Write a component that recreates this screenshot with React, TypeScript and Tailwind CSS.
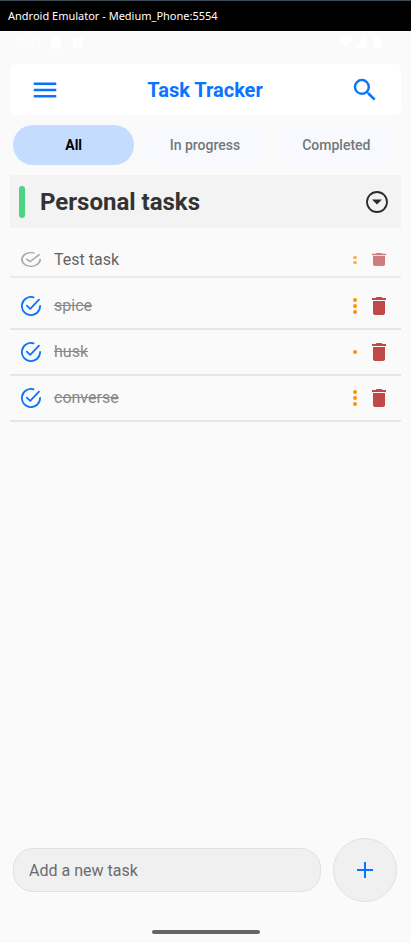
import { useState } from "react";

type Task = { name: string; done: boolean; dots: number };

const tasks: Task[] = [
  { name: "Test task", done: false, dots: 2 },
  { name: "spice", done: true, dots: 3 },
  { name: "husk", done: true, dots: 1 },
  { name: "converse", done: true, dots: 3 },
];

const filters = ["All", "In progress", "Completed"];

function MenuIcon() {
  return (
    <svg viewBox="0 0 24 24" className="size-[30px]" fill="currentColor" aria-hidden="true">
      <path d="M3 18h18v-2H3v2zm0-5h18v-2H3v2zm0-7v2h18V6H3z" />
    </svg>
  );
}

function SearchIcon() {
  return (
    <svg viewBox="0 0 24 24" className="size-[30px]" fill="currentColor" aria-hidden="true">
      <path d="M15.5 14h-.79l-.28-.27A6.471 6.471 0 0016 9.5 6.5 6.5 0 109.5 16c1.61 0 3.09-.59 4.23-1.57l.27.28v.79l5 4.99L20.49 19l-4.99-5zm-6 0C7.01 14 5 11.99 5 9.5S7.01 5 9.5 5 14 7.01 14 9.5 11.99 14 9.5 14z" />
    </svg>
  );
}

function CheckIcon({ className }: { className: string }) {
  return (
    <svg
      viewBox="0 0 20 20"
      preserveAspectRatio="none"
      className={className}
      fill="none"
      stroke="currentColor"
      strokeWidth="1.8"
      strokeLinecap="round"
      strokeLinejoin="round"
      aria-hidden="true"
    >
      <path d="M12.6 1.300A9.100 9.100 0 1 0 19.100 10" />
      <path d="M5.800 9.600l3.400 3.200 8.800-9.200" />
    </svg>
  );
}

function TrashIcon({ className }: { className: string }) {
  return (
    <svg viewBox="5 3 14 18" preserveAspectRatio="none" className={className} fill="currentColor" aria-hidden="true">
      <path d="M6 19c0 1.1.9 2 2 2h8c1.1 0 2-.9 2-2V7H6v12zM19 4h-3.500l-1-1h-5l-1 1H5v2h14V4z" />
    </svg>
  );
}

function TaskRow({ task }: { task: Task }) {
  return (
    <li
      className={`flex items-center border-b-2 border-[#e6e6e6] pl-[11px] pr-[15px] ${
        task.done ? "h-[46px]" : "mb-[6px] h-[35px] opacity-70"
      }`}
    >
      <button
        type="button"
        aria-label={`Toggle ${task.name}`}
        className={task.done ? "text-[#0a73ff]" : "text-[#858585]"}
      >
        <CheckIcon className={task.done ? "h-5 w-5" : "h-[15px] w-5"} />
      </button>
      <span
        className={`ml-[13px] flex-1 text-base leading-5 ${
          task.done ? "text-[#888888] line-through" : "text-[#1f1f1f]"
        }`}
      >
        {task.name}
      </span>
      <span className={`flex w-1 flex-col items-center ${task.done ? "gap-[2px]" : "gap-[2px]"}`}>
        {Array.from({ length: task.dots }, (_, i) => (
          <span key={i} className={`w-1 rounded-full bg-[#ff9200] ${task.done ? "h-1" : "h-[3px]"}`} />
        ))}
      </span>
      <button type="button" aria-label={`Delete ${task.name}`} className="ml-[15px] text-[#c04848]">
        <TrashIcon className={task.done ? "h-[18px] w-[14px]" : "h-[13px] w-[14px]"} />
      </button>
    </li>
  );
}

export default function App() {
  const [active, setActive] = useState("All");

  return (
    <div className="flex min-h-screen flex-col bg-[#fafafa] font-[Roboto,sans-serif]">
      <div className="h-[31px] border-t border-[#3b4a54] bg-black px-2 font-['Noto_Sans',sans-serif] text-[11px] leading-[30px] text-white">
        Android Emulator - Medium_Phone:5554
      </div>

      <div className="flex h-[33px] items-start justify-between pl-4 pr-[29px] pt-1 text-white">
        <div className="flex items-center gap-2 text-sm leading-4">
          <span>8:31</span>
          <svg viewBox="0 0 10 12" className="h-3 w-[10px]" fill="currentColor" aria-hidden="true">
            <path d="M3 0h6l1 1v10l-1 1H1l-1-1V3z" />
          </svg>
          <svg viewBox="0 0 10 10" className="ml-1 size-[10px]" fill="currentColor" fillRule="evenodd" aria-hidden="true">
            <path d="M1 0h8l1 1v8l-1 1H1L0 9V1zM5 2L2.500 8h1l.5-1.300h2L6.500 8h1zM5 4l.6 1.700H4.400z" />
          </svg>
        </div>
        <svg viewBox="0 0 44 14" className="h-[14px] w-[44px]" fill="currentColor" aria-hidden="true">
          <path d="M0 4Q7-2 15 4L7.500 13zM28 1v12H16zM37 2h1V0h3v2h2l1 1v10h-8V3z" />
        </svg>
      </div>

      <header className="mx-[10px] flex h-[51px] items-center justify-between rounded-md bg-white pl-5 pr-[21px] text-[#0a73ff]">
        <button type="button" aria-label="Menu">
          <MenuIcon />
        </button>
        <h1 className="text-xl font-bold leading-6">Task Tracker</h1>
        <button type="button" aria-label="Search">
          <SearchIcon />
        </button>
      </header>

      <nav aria-label="Task filters" className="ml-[13px] mr-[14px] mt-[10px] grid grid-cols-3 gap-[10px]">
        {filters.map((f) => (
          <button
            key={f}
            type="button"
            aria-pressed={active === f}
            onClick={() => setActive(f)}
            className={`h-10 rounded-full text-sm ${
              active === f ? "bg-[#c4ddff] font-bold text-black" : "bg-[#f7f9fe] font-medium text-[#757779]"
            }`}
          >
            {f}
          </button>
        ))}
      </nav>

      <main className="mx-[10px] mt-[10px] flex-1">
        <section>
          <div className="flex h-[53px] items-center bg-[#f3f3f3] pl-[9px] pr-3">
            <span className="h-8 w-[6px] rounded-full bg-[#4cd483]" />
            <h2 className="ml-[15px] flex-1 text-2xl font-bold text-[#333333]">Personal tasks</h2>
            <button type="button" aria-label="Collapse" className="text-[#2b2b2b]">
              <svg viewBox="0 0 24 24" className="size-6" fill="none" aria-hidden="true">
                <circle cx="12" cy="12" r="10" stroke="currentColor" strokeWidth="1.8" />
                <path d="M7 9.500h10l-5 5z" fill="currentColor" />
              </svg>
            </button>
          </div>
          <ul className="mt-[15px]">
            {tasks.map((t) => (
              <TaskRow key={t.name} task={t} />
            ))}
          </ul>
        </section>
      </main>

      <form className="mb-7 ml-[13px] mr-[14px] flex items-center gap-3" onSubmit={(e) => e.preventDefault()}>
        <input
          type="text"
          aria-label="Add a new task"
          placeholder="Add a new task"
          className="h-11 min-w-0 flex-1 rounded-[20px] border border-[#e1e1e1] bg-[#f0f0f0] px-[15px] text-base text-[#333333] outline-none placeholder:text-[#6b6b6b]"
        />
        <button
          type="submit"
          aria-label="Add task"
          className="flex size-16 items-center justify-center rounded-full border border-[#e1e1e1] bg-[#f0f0f0] text-[#0a73ff]"
        >
          <svg viewBox="0 0 18 18" className="size-[18px]" fill="none" stroke="currentColor" strokeWidth="2" aria-hidden="true">
            <path d="M9 1v16M1 9h16" />
          </svg>
        </button>
      </form>
      <div className="mx-auto mb-[9px] h-1 w-[108px] rounded-full bg-[#666666]" />
    </div>
  );
}
